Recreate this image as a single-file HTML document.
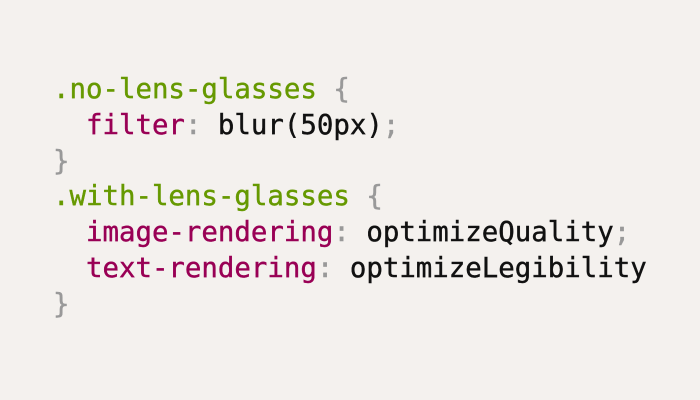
<!DOCTYPE html>
<html><head><style>
html,body{margin:0;padding:0;width:700px;height:400px;background:#f4f1ee;overflow:hidden}
pre{position:absolute;left:53px;top:72px;margin:0;font-family:"DejaVu Sans Mono","Liberation Mono",monospace;font-size:27.4px;line-height:35.8px;color:#111;-webkit-text-stroke:0.4px currentColor}
.s{color:#669900}.p{color:#990055}.g{color:#999}
</style></head><body>
<pre><span class="s">.no-lens-glasses</span> <span class="g">{</span>
  <span class="p">filter</span><span class="g">:</span> blur(50px)<span class="g">;</span>
<span class="g">}</span>
<span class="s">.with-lens-glasses</span> <span class="g">{</span>
  <span class="p">image-rendering</span><span class="g">:</span> optimizeQuality<span class="g">;</span>
  <span class="p">text-rendering</span><span class="g">:</span> optimizeLegibility
<span class="g">}</span></pre>
</body></html>
